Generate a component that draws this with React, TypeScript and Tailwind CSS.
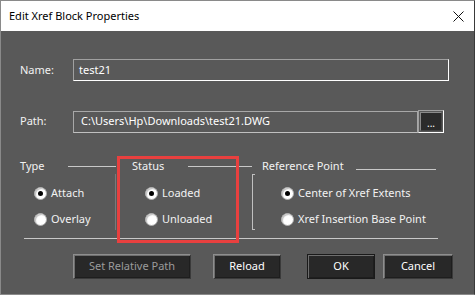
import React from "react";

function Radio({ checked }: { checked?: boolean }) {
  return (
    <span className="w-[13px] h-[13px] rounded-full bg-white border border-[#b0b0b0] flex items-center justify-center shrink-0 shadow-[inset_1px_1px_1px_rgba(0,0,0,0.25)]">
      {checked && <span className="w-[5px] h-[5px] rounded-full bg-black" />}
    </span>
  );
}

function RadioRow({ label, checked }: { label: string; checked?: boolean }) {
  return (
    <div className="flex items-center h-[16px] gap-[4px]">
      <Radio checked={checked} />
      <span className="text-[11px] text-[#f2f2f2] leading-[16px] whitespace-nowrap">{label}</span>
    </div>
  );
}

function Btn({ label, w, disabled, def }: { label: string; w: string; disabled?: boolean; def?: boolean }) {
  return (
    <div
      className={`${w} h-[25px] flex items-center justify-center bg-[#282828] border ${
        def ? "border-[#1a1a1a]" : "border-t-[#8e8e8e] border-l-[#8e8e8e] border-b-[#3a3a3a] border-r-[#3a3a3a]"
      } shadow-[inset_1px_1px_0_#6e6e6e,inset_-1px_-1px_0_#1e1e1e] text-[11px] ${disabled ? "text-[#9b9b9b]" : "text-white"}`}
    >
      {label}
    </div>
  );
}

export default function App() {
  return (
    <div className="w-[475px] h-[295px] bg-[#595959] border border-[#8a8a8a] border-r-[#3a3a3a] flex flex-col relative overflow-hidden font-['Noto_Sans',sans-serif]">
      <div className="h-[30px] bg-white flex items-center pl-2 pr-[10px] shrink-0">
        <span className="text-[11px] text-black">Edit Xref Block Properties</span>
        <svg className="ml-auto" width="11" height="11" viewBox="0 0 11 11">
          <path d="M0.5 0.5 L10.5 10.5 M10.5 0.5 L0.5 10.5" stroke="#111" strokeWidth="1" />
        </svg>
      </div>

      <div className="flex flex-col pl-[19px]">
        <div className="flex items-center mt-[28px] h-[22px]">
          <span className="w-[53px] text-[11px] text-[#f2f2f2]">Name:</span>
          <div className="w-[376px] h-[22px] border border-t-[#a0a0a0] border-l-[#a0a0a0] border-b-white border-r-white flex items-center pl-[5px] text-[11px] text-white">
            test21
          </div>
        </div>

        <div className="flex items-center mt-[29px] h-[23px]">
          <span className="w-[53px] text-[11px] text-[#f2f2f2]">Path:</span>
          <div className="w-[345px] h-[22px] border border-[#a8a8a8] border-b-[#c0c0c0] flex items-center pl-[7px] text-[11px] text-white">
            C:\Users\Hp\Downloads\test21.DWG
          </div>
          <div className="w-[26px] h-[23px] border border-t-[#a0a0a0] border-l-[#a0a0a0] border-b-white border-r-white p-[1px]">
            <div className="w-full h-full bg-[#2b2b2b] border border-t-[#8a8a8a] border-l-[#8a8a8a] border-b-[#444] border-r-[#444] flex items-end justify-center pb-[1px] text-[10px] leading-[12px] text-white">
              ...
            </div>
          </div>
        </div>

        <div className="flex mt-[25px]">
          <div className="w-[96px] flex flex-col">
            <div className="flex items-center h-[16px]">
              <span className="text-[11px] text-[#f2f2f2]">Type</span>
              <div className="ml-auto w-[48px] h-px bg-[#c8c8c8]" />
            </div>
            <div className="h-[56px] flex flex-col gap-[10px] pt-[11px] pl-[14px] border-r border-[#7a7a7a]">
              <RadioRow label="Attach" checked />
              <RadioRow label="Overlay" />
            </div>
          </div>

          <div className="w-[136px] flex flex-col">
            <div className="flex items-center h-[16px]">
              <span className="pl-[16px] text-[11px] text-[#f2f2f2]">Status</span>
              <div className="ml-auto w-[64px] h-px bg-[#c8c8c8]" />
            </div>
            <div className="h-[56px] flex flex-col gap-[10px] pt-[11px] pl-[29px]">
              <RadioRow label="Loaded" checked />
              <RadioRow label="Unloaded" />
            </div>
          </div>

          <div className="flex-1 flex flex-col">
            <div className="flex items-center h-[16px]">
              <span className="pl-[10px] text-[11px] text-[#f2f2f2]">Reference Point</span>
              <div className="ml-[12px] mt-[6px] w-[80px] h-px bg-[#c8c8c8]" />
            </div>
            <div className="h-[56px] flex">
              <div className="w-[3px] h-[56px] border-l border-t border-b border-[#c0c0c0]" />
              <div className="flex flex-col gap-[10px] pt-[11px] pl-[26px]">
                <RadioRow label="Center of Xref Extents" checked />
                <RadioRow label="Xref Insertion Base Point" />
              </div>
            </div>
          </div>
        </div>

        <div className="ml-[4px] mt-[8px] w-[414px] h-px bg-[#c8c8c8]" />

        <div className="flex mt-[15px] ml-[53px]">
          <Btn label="Set Relative Path" w="w-[118px]" disabled />
          <div className="ml-[22px]">
            <Btn label="Reload" w="w-[68px]" />
          </div>
          <div className="ml-[26px]">
            <Btn label="OK" w="w-[68px]" def />
          </div>
          <div className="ml-[8px]">
            <Btn label="Cancel" w="w-[70px]" />
          </div>
        </div>
      </div>

      <div className="absolute left-[116px] top-[155px] w-[122px] h-[87px] border-[3px] border-[#e8403f]" />
    </div>
  );
}
